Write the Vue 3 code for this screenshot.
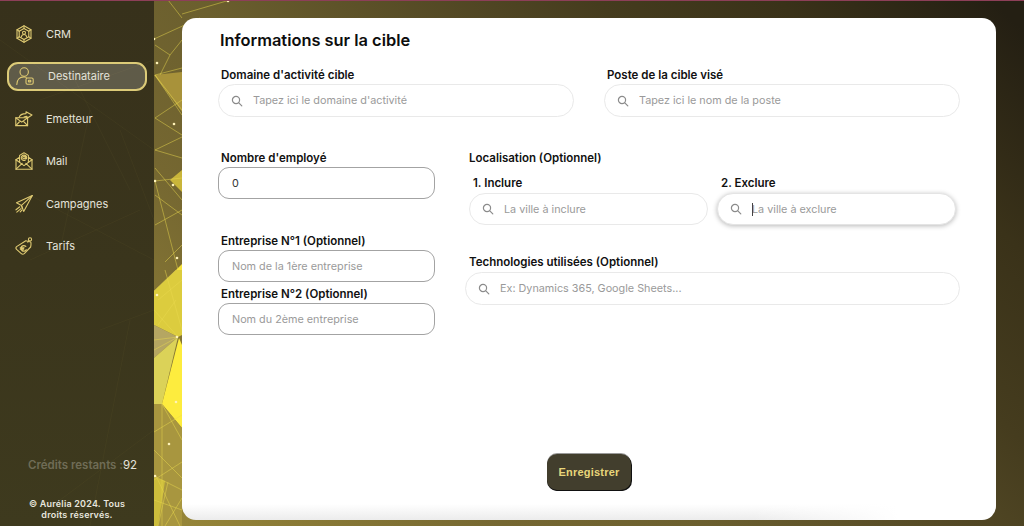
<script setup>
const nav = [
  { label: 'CRM', icon: 'crm' },
  { label: 'Destinataire', icon: 'person', active: true },
  { label: 'Emetteur', icon: 'send' },
  { label: 'Mail', icon: 'mail' },
  { label: 'Campagnes', icon: 'plane' },
  { label: 'Tarifs', icon: 'tag' },
]
const facets = [
  { p: '154,75 182,72 182,112', f: '#a8923a' },
  { p: '170,180 182,170 182,192', f: '#c9b53a' },
  { p: '176,270 182,264 182,272', f: '#f5e23a' },
  { p: '154,291 176,270 182,270 182,335 178,337 154,325', f: '#dccc3e' },
  { p: '154,325 178,337 154,358', f: '#b5a662' },
  { p: '154,358 178,337 162,404 154,404', f: '#dbd258' },
  { p: '179,338 182,345 182,428 162,404', f: '#fdec3e' },
  { p: '154,404 162,404 182,428 182,526 154,526', f: '#a8963f' },
  { p: '154,477 165,481 158,526 154,526', f: '#cdbd3c' },
]
const lines = [
  [155,75,182,110],[155,75,182,68],[155,75,182,115],[155,45,170,55],[170,55,182,40],[170,55,160,75],
  [155,118,182,135],[155,118,182,100],[155,150,182,158],[155,150,182,137],[155,168,182,200],
  [155,181,182,178],[155,181,178,270],[155,195,182,215],[155,225,182,210],[165,262,182,245],
  [154,39,200,18],[168,0,182,18],[230,0,182,14],
  [154,291,176,270],[158,300,182,280],[165,270,182,330],[154,310,178,337],[158,325,176,300],
  [154,340,178,337],[154,350,178,337],[162,404,162,526],[162,404,182,440],[154,432,182,415],
  [154,480,182,462],[154,476,182,490],[156,476,180,526],[182,498,165,526],[154,450,182,478],
  [154,500,182,510],[158,526,168,482],
]
const dots = [[154,39],[157,63],[174,124],[155,181],[173,185],[177,258],[157,295],[177,337],[176,402],[169,444],[155,476],[228,1]]
const faint = [
  [0,40,154,150],[40,100,154,60],[90,110,60,250],[120,130,154,220],[30,260,140,210],[100,330,154,310],
  [130,320,90,526],[154,430,60,500],[20,190,154,260],[70,70,130,190],
]
</script>

<template>
  <div class="page">
    <svg class="backdrop" width="1024" height="526" viewBox="0 0 1024 526" aria-hidden="true">
      <polygon v-for="(t, i) in facets" :key="i" :points="t.p" :fill="t.f" />
      <line v-for="(l, i) in lines" :key="'l' + i" :x1="l[0]" :y1="l[1]" :x2="l[2]" :y2="l[3]" stroke="#ead94e" stroke-width=".8" stroke-opacity=".6" />
      <circle v-for="(d, i) in dots" :key="'d' + i" :cx="d[0]" :cy="d[1]" r="1.3" fill="#fff3b8" />
    </svg>
    <div class="topline"></div>
    <div class="shell">
      <aside class="sidebar">
        <svg class="faint" width="154" height="526" aria-hidden="true">
          <line v-for="(l, i) in faint" :key="i" :x1="l[0]" :y1="l[1]" :x2="l[2]" :y2="l[3]" stroke="#8a7f45" stroke-width=".5" stroke-opacity=".16" />
        </svg>
        <nav class="menu">
          <a v-for="item in nav" :key="item.label" class="item" :class="{ active: item.active }">
            <svg class="icon" width="18" height="18" viewBox="0 0 18 18" fill="none" stroke="#dfca72" stroke-width="1.1" stroke-linecap="round" stroke-linejoin="round">
              <template v-if="item.icon === 'crm'">
                <path d="M9 .8 16 4.8v8.4l-7 4-7-4V4.8Z" />
                <path d="M9 3.4 13.8 6.2v5.6L9 14.6l-4.800-2.800V6.200Z" />
                <path d="M9 .8v2.600M16 4.800l-2.200 1.400M16 13.200l-2.200-1.400M9 17.200v-2.600M2 13.200l2.200-1.400M2 4.800l2.200 1.400" />
                <circle cx="9" cy="7.800" r="1.500" />
                <path d="M6.300 12c.3-1.700 1.400-2.500 2.700-2.500s2.400.8 2.700 2.500" />
              </template>
              <template v-else-if="item.icon === 'person'">
                <circle cx="8.200" cy="5" r="4.200" />
                <path d="M.8 17.500c0-4.800 3-7.600 7.200-7.600.8 0 1.600.1 2.300.4" />
                <rect x="10" y="11" width="7.200" height="6.200" rx="1.400" />
                <rect x="12.400" y="13.300" width="2.400" height="1.600" rx=".5" />
              </template>
              <template v-else-if="item.icon === 'send'">
                <rect x=".8" y="7.800" width="11.800" height="7.800" />
                <path d="m.8 7.800 5.900 4.300 5.900-4.300M.8 15.600l4.400-4.600M12.600 15.600l-4.400-4.600" />
                <path d="M4 7.600c.8-2.800 3.200-4 7-4V1.800l6 3.200-5 3.200V6.400c-.8 0-2 .1-3 .5" />
              </template>
              <template v-else-if="item.icon === 'mail'">
                <path d="M1 7.800v9.400h16V7.800" />
                <path d="M1 7.800l3.600-2.600M17 7.800l-3.600-2.600M4.600 10.200V3.400L9 .8l4.400 2.600v6.800" />
                <path d="M1 17.200l6.200-5.800M17 17.200l-6.200-5.800M1 7.800l8 5.800 8-5.800" />
                <circle cx="9" cy="5.600" r="1.300" />
                <path d="M10.300 4.800v1.400c0 1 1.400 1 1.400-.4A2.700 2.700 0 1 0 10.200 8.200" />
              </template>
              <template v-else-if="item.icon === 'plane'">
                <path d="M17.300.6 1.500 7.800l5 2.600 2.200 6L17.300.6Z" />
                <path d="M17.300.6 6.500 10.400l.9 3" />
                <path d="M4.800 11.800 1 14.800M6 13.600l-4.200 3.600M7 15l-1.800 1.800" />
              </template>
              <template v-else>
                <path d="M10.800 3.800 15.800 5c.4 1.800.2 3.400-.2 5L9.300 16.600c-1 .8-2.200.7-3 0l-4.700-4.200c-.8-.9-.8-2 0-2.800Z" />
                <circle cx="15" cy="2.400" r="1.600" />
                <path d="M14 3.600 12.800 5.200" />
                <path d="M10.800 9.400a2.800 2.800 0 1 0 .4 3.400M5.200 10.800h3.800M5.400 12.200h3.200" stroke-width="1.300" />
              </template>
            </svg>
            <span>{{ item.label }}</span>
          </a>
        </nav>
        <div class="foot">
          <p class="credits"><span>Crédits restants :</span><b>92</b></p>
          <p class="copy">© Aurélia 2024. Tous<br />droits réservés.</p>
        </div>
      </aside>

      <main class="main">
        <section class="card">
          <h1>Informations sur la cible</h1>
          <div class="row-top">
            <div class="field">
              <label>Domaine d'activité cible</label>
              <div class="search">
                <svg class="mag" width="12" height="12" viewBox="0 0 12 12" fill="none" stroke="#8b8b8b" stroke-width="1.2" stroke-linecap="round"><circle cx="5" cy="5" r="3.600" /><path d="m7.800 7.800 3 3" /></svg>
                <input placeholder="Tapez ici le domaine d'activité" />
              </div>
            </div>
            <div class="field">
              <label>Poste de la cible visé</label>
              <div class="search">
                <svg class="mag" width="12" height="12" viewBox="0 0 12 12" fill="none" stroke="#8b8b8b" stroke-width="1.2" stroke-linecap="round"><circle cx="5" cy="5" r="3.600" /><path d="m7.800 7.800 3 3" /></svg>
                <input placeholder="Tapez ici le nom de la poste" />
              </div>
            </div>
          </div>

          <div class="row-low">
            <div class="col-left">
              <div class="field">
                <label>Nombre d'employé</label>
                <input class="plain" value="0" />
              </div>
              <div class="field second">
                <label>Entreprise N°1 (Optionnel)</label>
                <input class="plain" placeholder="Nom de la 1ère entreprise" />
              </div>
              <div class="field third">
                <label>Entreprise N°2 (Optionnel)</label>
                <input class="plain" placeholder="Nom du 2ème entreprise" />
              </div>
            </div>
            <div class="col-right">
              <label class="head">Localisation (Optionnel)</label>
              <div class="places">
                <div class="field">
                  <label>1. Inclure</label>
                  <div class="search inset">
                    <svg class="mag" width="12" height="12" viewBox="0 0 12 12" fill="none" stroke="#8b8b8b" stroke-width="1.2" stroke-linecap="round"><circle cx="5" cy="5" r="3.600" /><path d="m7.800 7.800 3 3" /></svg>
                    <input placeholder="La ville à inclure" />
                  </div>
                </div>
                <div class="field">
                  <label>2. Exclure</label>
                  <div class="search inset focused">
                    <svg class="mag" width="12" height="12" viewBox="0 0 12 12" fill="none" stroke="#8b8b8b" stroke-width="1.2" stroke-linecap="round"><circle cx="5" cy="5" r="3.600" /><path d="m7.800 7.800 3 3" /></svg>
                    <input placeholder="La ville à exclure" />
                    <i class="caret"></i>
                  </div>
                </div>
              </div>
              <label class="head tech">Technologies utilisées (Optionnel)</label>
              <div class="search">
                <svg class="mag" width="12" height="12" viewBox="0 0 12 12" fill="none" stroke="#8b8b8b" stroke-width="1.2" stroke-linecap="round"><circle cx="5" cy="5" r="3.600" /><path d="m7.800 7.800 3 3" /></svg>
                <input placeholder="Ex: Dynamics 365, Google Sheets..." />
              </div>
            </div>
          </div>

          <button class="save">Enregistrer</button>
        </section>
      </main>
    </div>
  </div>
</template>

<style scoped>
.page {
  position: relative;
  width: 1024px;
  height: 526px;
  overflow: hidden;
  font-family: Inter, "Liberation Sans", sans-serif;
  background: linear-gradient(46deg, #a8963c 0%, #756731 33%, #6b5f2e 46%, #4f4523 65%, #453c1e 72%, #3a3219 84%, #241f13 98%);
}
.backdrop { position: absolute; inset: 0; }
.topline { position: relative; height: 1px; background: #8d3f58; }
.shell { position: relative; display: flex; height: 525px; }

.sidebar {
  position: relative;
  width: 154px;
  flex: none;
  display: flex;
  flex-direction: column;
  background: linear-gradient(180deg, #37311b 0%, #3a351c 50%, #3e3a1e 100%);
  color: #e4e2da;
}
.faint { position: absolute; left: 0; top: -1px; }
.menu {
  position: relative;
  display: flex;
  flex-direction: column;
  gap: 13.6px;
  padding: 18px 7px 0;
}
.item {
  display: flex;
  align-items: center;
  gap: 13px;
  height: 29px;
  padding-left: 8px;
  box-sizing: border-box;
  font-size: 11px;
  border-radius: 11px;
}
.item.active {
  border: 2px solid #dccb78;
  background: rgba(255, 255, 255, 0.2);
  padding-left: 7px;
  gap: 14px;
}
.icon { flex: none; }
.foot {
  position: relative;
  margin-top: auto;
  padding-bottom: 6px;
}
.credits {
  margin: 0 0 26px;
  padding-left: 28px;
  font-size: 11.5px;
  line-height: 14px;
}
.credits span { font-weight: 600; color: #6f6c56; }
.credits b { font-weight: 400; color: #e6e4dc; }
.copy {
  margin: 0;
  text-align: center;
  font-size: 9px;
  line-height: 11px;
  font-weight: 600;
  letter-spacing: .2px;
  color: #e8e6de;
}

.main { flex: 1; padding: 17px 28px 6px; min-width: 0; }
.card {
  position: relative;
  height: 502px;
  box-sizing: border-box;
  padding: 12px 36px 29px;
  border-radius: 14px;
  display: flex;
  flex-direction: column;
  background:
    linear-gradient(to right, rgba(255, 255, 255, 0) 70%, #fff 88%),
    linear-gradient(to top, #ececec, #fff 16px);
}
h1 {
  margin: 0;
  padding-left: 2px;
  font-size: 16.4px;
  line-height: 20px;
  font-weight: 600;
  color: #0d0d0d;
}
label {
  display: block;
  font-size: 11.5px;
  line-height: 14px;
  font-weight: 600;
  color: #111;
}
.field label { padding-left: 3px; margin-bottom: 2px; }
.row-top {
  display: grid;
  grid-template-columns: 356px 356px;
  gap: 30px;
  margin-top: 18px;
}
.search {
  position: relative;
  display: flex;
  align-items: center;
  height: 33px;
  box-sizing: border-box;
  padding-left: 12px;
  gap: 10px;
  border: 1px solid #e9e9e9;
  border-radius: 17px;
  background: #fff;
}
.search input {
  flex: 1;
  min-width: 0;
  border: 0;
  outline: 0;
  padding: 0;
  background: transparent;
  font: 10.8px Inter, "Liberation Sans", sans-serif;
}
input::placeholder { color: #9a9a9a; opacity: 1; }
.mag { flex: none; }
.focused {
  border-color: #e4e4e4;
  box-shadow: 0 1px 5px rgba(0, 0, 0, 0.28);
}
.caret {
  position: absolute;
  left: 34px;
  top: 9px;
  width: 1px;
  height: 13px;
  background: #444;
}
.row-low {
  display: grid;
  grid-template-columns: 217px 495px;
  gap: 30px;
  margin-top: 34px;
}
.plain {
  display: block;
  width: 100%;
  height: 32px;
  box-sizing: border-box;
  padding: 0 13px;
  border: 1px solid #a3a3a3;
  border-radius: 11px;
  outline: 0;
  background: #fff;
  color: #333;
  font: 10.8px Inter, "Liberation Sans", sans-serif;
}
.second { margin-top: 35px; }
.third { margin-top: 5px; }
.head { padding-left: 4px; }
.places {
  display: grid;
  grid-template-columns: 239px 239px;
  gap: 9px;
  padding-left: 4px;
  margin-top: 11px;
}
.places .field label { padding-left: 4px; margin-bottom: 3px; }
.inset { height: 32px; }
.tech { margin: 30px 0 3px; }
.save {
  align-self: center;
  margin-top: auto;
  margin-bottom: 1px;
  width: 84px;
  height: 36px;
  border: 0;
  border-radius: 10px;
  background: #423e2d;
  box-shadow: 0 1px 0 #111, 1px 1px 0 #111, 0 -1px 0 #9a9a9a;
  color: #e8d67a;
  font: 700 11px "Liberation Sans", sans-serif;
  letter-spacing: .2px;
}
</style>
